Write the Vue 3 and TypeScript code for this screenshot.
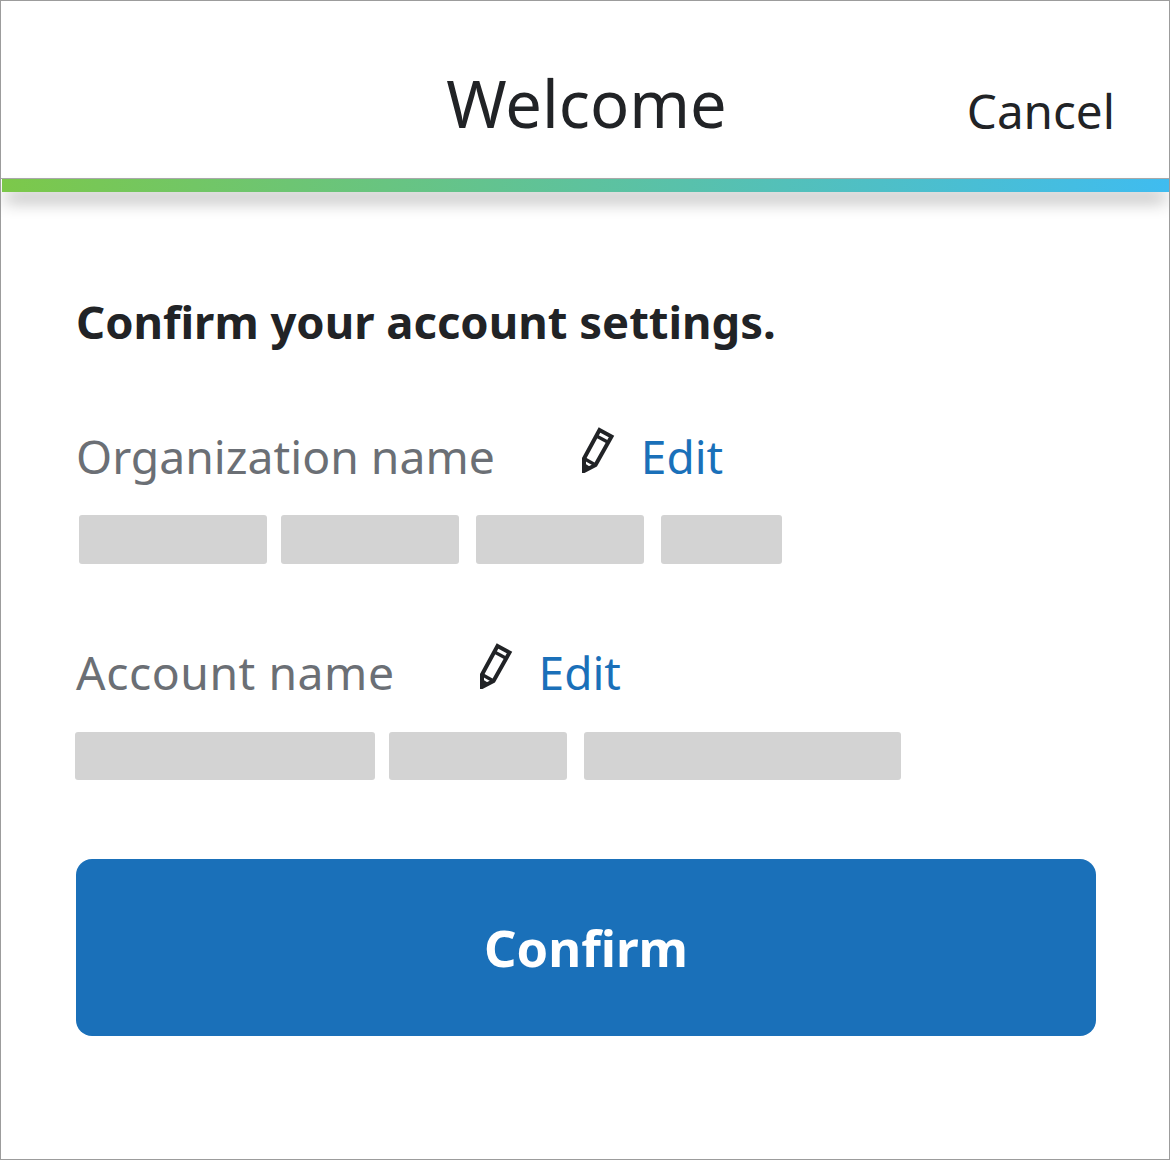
<script setup lang="ts">
interface Field { label: string; gap: number; spacing: number; offset: number; blocks: { w: number; g: number }[] }
const fields: Field[] = [
  { label: 'Organization name', gap: 86, spacing: 0, offset: 3, blocks: [{ w: 188, g: 14 }, { w: 178, g: 17 }, { w: 168, g: 17 }, { w: 121, g: 0 }] },
  { label: 'Account name', gap: 84, spacing: 0.55, offset: -1, blocks: [{ w: 300, g: 14 }, { w: 178, g: 17 }, { w: 317, g: 0 }] },
]
</script>

<template>
  <div class="frame">
    <header class="header">
      <h1 class="title">Welcome</h1>
      <span class="cancel">Cancel</span>
    </header>
    <div class="bar"></div>
    <main class="content">
      <h2 class="heading">Confirm your account settings.</h2>
      <section v-for="f in fields" :key="f.label" class="field">
        <div class="label-row">
          <span class="label" :style="{ letterSpacing: f.spacing + 'px' }">{{ f.label }}</span>
          <svg class="pencil" :style="{ marginLeft: f.gap + 'px' }" viewBox="0 0 34 46" width="34" height="46" fill="none" stroke="#212326" stroke-width="4">
            <path d="M18.5 3 L30.5 9.5 L14.5 38 L3 44 L3 31.5 Z" stroke-linejoin="miter" />
            <path d="M15.5 9 L27.5 15.5" stroke-width="3.2" />
            <path d="M3 31.5 L14.5 38" stroke-width="3.2" />
            <path d="M1.5 45.5 L1.5 35 L11 41 Z" fill="#212326" stroke="none" />
          </svg>
          <span class="edit">Edit</span>
        </div>
        <div class="blocks" :style="{ marginLeft: f.offset + 'px' }">
          <span
            v-for="(b, i) in f.blocks"
            :key="i"
            class="block"
            :style="{ width: b.w + 'px', marginRight: b.g + 'px' }"
          ></span>
        </div>
      </section>
      <button class="confirm" type="button">Confirm</button>
    </main>
  </div>
</template>

<style>
html, body { margin: 0; background: #fff; }
</style>

<style scoped>
.frame {
  box-sizing: border-box;
  width: 1170px;
  height: 1160px;
  border: 1px solid #9c9c9c;
  background: #fff;
  font-family: "Noto Sans", "Open Sans", sans-serif;
  overflow: hidden;
}
.header {
  position: relative;
  height: 177px;
  display: flex;
  justify-content: center;
  border-bottom: 1px solid #a8a8a8;
  box-sizing: content-box;
}
.title {
  margin: 60px 0 0 3px;
  font-size: 65px;
  line-height: 84px;
  font-weight: 400;
  color: #212326;
}
.cancel {
  position: absolute;
  right: 54px;
  top: 81px;
  font-size: 47.6px;
  line-height: 58px;
  color: #212326;
}
.bar {
  height: 12.5px;
  margin-left: 1px;
  background: linear-gradient(90deg, #7cc84a 0%, #3fbcf0 100%);
  box-shadow: 0 11px 17px -3px rgba(0, 0, 0, 0.46);
}
.content {
  padding: 101.5px 73px 0 75px;
}
.heading {
  margin: 0;
  font-size: 45.4px;
  line-height: 56px;
  font-weight: 700;
  color: #212326;
}
.field { margin-top: 78px; }
.field + .field { margin-top: 79px; }
.label-row {
  display: flex;
  align-items: center;
  height: 60px;
}
.label {
  font-size: 46.3px;
  line-height: 60px;
  color: #6b6f75;
}
.pencil {
  flex: none;
  margin-bottom: 14px;
}
.edit {
  margin-left: 26px;
  margin-bottom: 2px;
  font-size: 46px;
  line-height: 60px;
  color: #1a70b9;
}
.blocks {
  display: flex;
  margin-top: 28px;
}
.field + .field .blocks { margin-top: 29px; }
.block {
  height: 49px;
  border-radius: 3px;
  background: #d3d3d3;
}
.field + .field .block { height: 48px; }
.confirm {
  display: block;
  width: 1020px;
  height: 177px;
  margin-top: 79px;
  border: none;
  border-radius: 16px;
  background: #1a70b9;
  color: #fff;
  font-family: inherit;
  font-size: 50.7px;
  font-weight: 700;
}
</style>
